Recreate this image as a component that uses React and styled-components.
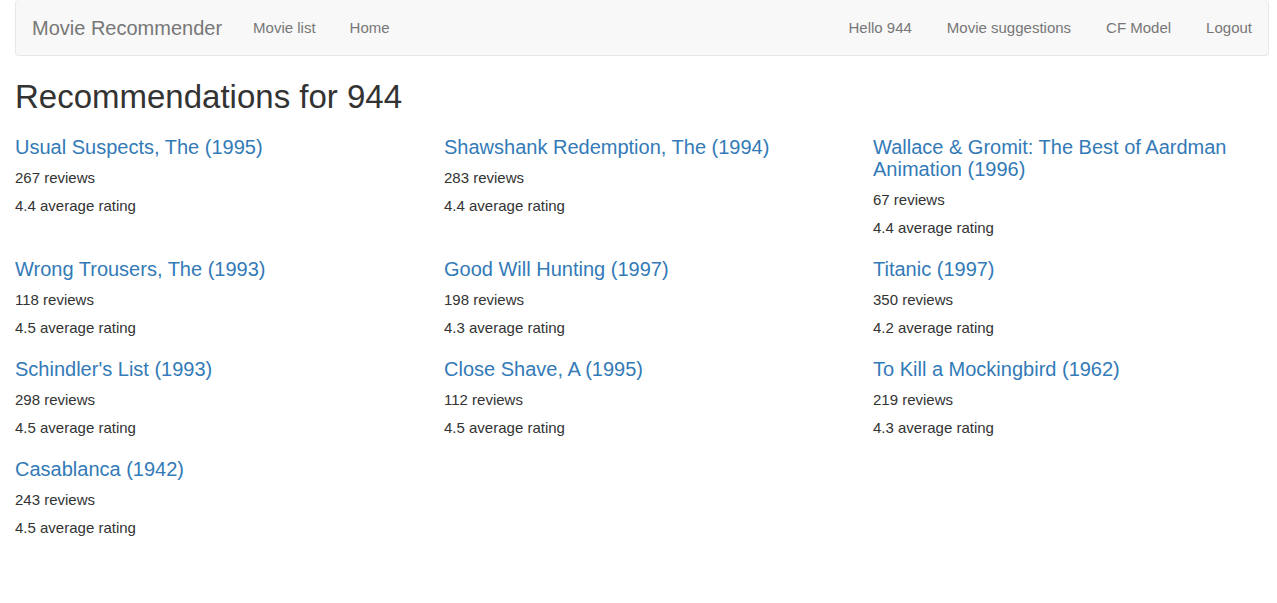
import React from "react";
import styled, { createGlobalStyle } from "styled-components";

const GlobalStyle = createGlobalStyle`
  *, *::before, *::after { box-sizing: border-box; }
  body {
    margin: 0;
    background: #fff;
    color: #333;
    font-family: "Helvetica Neue", Helvetica, Arial, "Liberation Sans", sans-serif;
    font-size: 15px;
    line-height: 22px;
  }
`;

const Page = styled.div`
  padding: 0 8px 0 15px;
`;

const Navbar = styled.nav`
  display: flex;
  justify-content: space-between;
  min-height: 56px;
  margin-bottom: 22px;
  background: #f8f8f8;
  border: 1px solid #e7e7e7;
  border-top: 0;
  border-radius: 4px;
`;

const NavGroup = styled.div`
  display: flex;
  align-items: center;
`;

const NavList = styled.ul`
  display: flex;
  gap: ${({ $gap }) => $gap || 0}px;
  margin: 0;
  padding: 0;
  list-style: none;
`;

const NavLink = styled.a`
  display: block;
  padding: 0 16px;
  color: #777;
  text-decoration: none;
`;

const Brand = styled(NavLink)`
  padding-right: 15px;
  font-size: 20px;
`;

const Title = styled.h1`
  margin: 0 0 20px;
  font-size: 33px;
  font-weight: 400;
  line-height: 38px;
`;

const MovieGrid = styled.main`
  display: grid;
  grid-template-columns: repeat(3, minmax(0, 1fr));
  column-gap: 33px;
  row-gap: 19px;
`;

const MovieTitle = styled.h2`
  margin: 0 0 9px;
  font-size: 20px;
  font-weight: 400;
  line-height: 22px;
`;

const MovieLink = styled.a`
  color: #337ab7;
  text-decoration: none;
`;

const Detail = styled.p`
  margin: 0;

  & + & { margin-top: 6px; }
`;

const movies = [
  ["Usual Suspects, The (1995)", 267, 4.4],
  ["Shawshank Redemption, The (1994)", 283, 4.4],
  ["Wallace & Gromit: The Best of Aardman Animation (1996)", 67, 4.4],
  ["Wrong Trousers, The (1993)", 118, 4.5],
  ["Good Will Hunting (1997)", 198, 4.3],
  ["Titanic (1997)", 350, 4.2],
  ["Schindler's List (1993)", 298, 4.5],
  ["Close Shave, A (1995)", 112, 4.5],
  ["To Kill a Mockingbird (1962)", 219, 4.3],
  ["Casablanca (1942)", 243, 4.5],
];

function NavItems({ items, gap }) {
  return (
    <NavList $gap={gap}>
      {items.map((item) => (
        <li key={item}><NavLink href="#">{item}</NavLink></li>
      ))}
    </NavList>
  );
}

function Movie({ title, reviews, rating }) {
  return (
    <article>
      <MovieTitle><MovieLink href="#">{title}</MovieLink></MovieTitle>
      <Detail>{reviews} reviews</Detail>
      <Detail>{rating} average rating</Detail>
    </article>
  );
}

export default function App() {
  return (
    <>
      <GlobalStyle />
      <Page>
        <Navbar>
          <NavGroup>
            <Brand href="#">Movie Recommender</Brand>
            <NavItems gap={2} items={["Movie list", "Home"]} />
          </NavGroup>
          <NavGroup>
            <NavItems gap={3} items={["Hello 944", "Movie suggestions", "CF Model", "Logout"]} />
          </NavGroup>
        </Navbar>
        <Title>Recommendations for 944</Title>
        <MovieGrid>
          {movies.map(([title, reviews, rating]) => (
            <Movie key={title} title={title} reviews={reviews} rating={rating} />
          ))}
        </MovieGrid>
      </Page>
    </>
  );
}
